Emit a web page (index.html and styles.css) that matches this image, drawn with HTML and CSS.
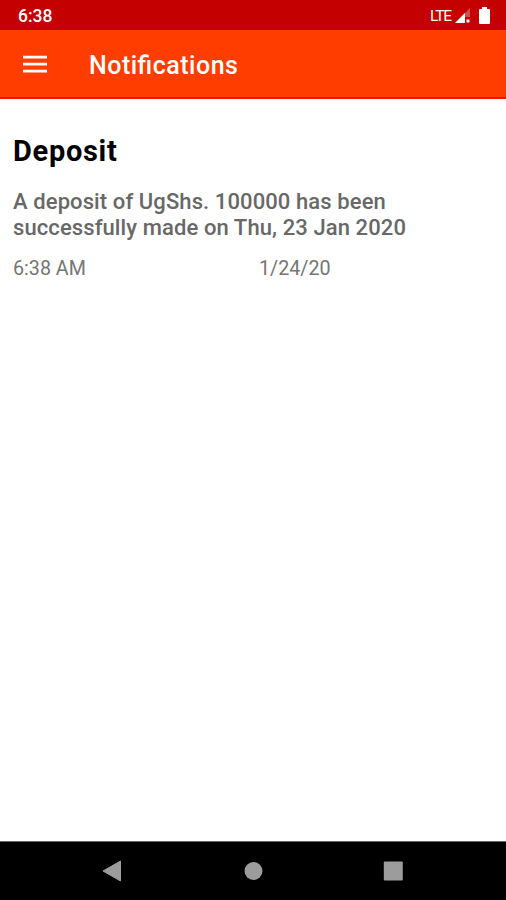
FILE: index.html
```html
<!DOCTYPE html>
<html lang="en">

<head>
  <meta charset="UTF-8" />
  <meta name="viewport" content="width=device-width, initial-scale=1.0" />
  <title>Notifications</title>
  <link rel="stylesheet" href="styles.css">
</head>

<body>
  <div class="status">
    <span class="clock">6:38</span>
    <div class="status-icons">
      <span class="network">LTE</span>
      <svg class="signal" width="15" height="15" viewBox="0 0 15 15">
        <path d="M0 15L15 0V9H10V15Z" fill="#fff" fill-opacity="0.3" />
        <path d="M0 15L10 5V15Z" fill="#fff" />
        <path d="M11.500 11.500h3v3h-3z" fill="#fff" />
      </svg>
      <svg class="battery" width="11" height="17" viewBox="0 0 11 17">
        <path d="M3 0h5v2h2q1 0 1 1v13q0 1-1 1H1q-1 0-1-1V3q0-1 1-1h2z" fill="#fff" />
      </svg>
    </div>
  </div>

  <header class="toolbar">
    <svg class="menu" width="24" height="18" viewBox="0 0 24 18">
      <path d="M0 0.800h24v2.700H0zM0 7.800h24v2.700H0zM0 14.800h24v2.700H0z" fill="#fff" />
    </svg>
    <h1>Notifications</h1>
  </header>

  <main>
    <div class="notification">
      <h2>Deposit</h2>
      <p>A deposit of UgShs. 100000 has been<br>successfully made on Thu, 23 Jan 2020</p>
      <div class="when">
        <span>6:38 AM</span>
        <span>1/24/20</span>
      </div>
    </div>
  </main>

  <nav class="navbar">
    <svg width="20" height="22" viewBox="0 0 20 22">
      <path d="M1 11L18.500 1V21Z" fill="#9c9c9c" stroke="#9c9c9c" stroke-linejoin="round" />
    </svg>
    <svg width="20" height="20" viewBox="0 0 20 20">
      <circle cx="10.500" cy="10" r="9" fill="#9c9c9c" />
    </svg>
    <svg width="20" height="20" viewBox="0 0 20 20">
      <rect x="0.800" y="0.500" width="19" height="19" rx="1" fill="#9c9c9c" />
    </svg>
  </nav>
</body>

</html>
```
FILE: styles.css
```css
* {
  box-sizing: border-box;
}

body {
  margin: 0;
  height: 900px;
  display: flex;
  flex-direction: column;
  background-color: white;
  font-family: Roboto, sans-serif;
}

h1, h2, p {
  margin: 0;
}

.status {
  height: 30px;
  padding: 1px 16px 0 18px;
  display: flex;
  align-items: center;
  justify-content: space-between;
  background-color: #c40000;
  color: white;
}

.clock {
  font-size: 17.5px;
  font-weight: 500;
  line-height: 20px;
}

.status-icons {
  display: flex;
  align-items: center;
}

.network {
  font-size: 15.5px;
  line-height: 18px;
  letter-spacing: -1.1px;
}

.signal {
  margin-left: 4px;
}

.battery {
  margin-left: 9px;
}

.toolbar {
  height: 69px;
  padding-left: 23px;
  display: flex;
  align-items: center;
  background-color: #ff3d00;
  border-bottom: 2px solid #f01800;
  color: white;
}

.toolbar h1 {
  margin-left: 42px;
  padding-top: 5px;
  font-size: 25px;
  font-weight: 500;
  line-height: 30px;
  letter-spacing: 0.5px;
  font-feature-settings: "liga" 1;
}

main {
  flex: 1;
}

.notification {
  padding: 35px 13px 0;
}

.notification h2 {
  font-size: 29px;
  font-weight: 700;
  line-height: 34px;
  letter-spacing: 0.7px;
  color: black;
}

.notification p {
  margin-top: 21px;
  font-size: 22px;
  font-weight: 500;
  line-height: 26px;
  letter-spacing: 0.1px;
  color: #686868;
}

.when {
  display: grid;
  grid-template-columns: 246px 1fr;
  margin-top: 16px;
  font-size: 19.7px;
  line-height: 24px;
  color: #757575;
}

.navbar {
  height: 59px;
  padding: 0 103px 0 102px;
  display: flex;
  align-items: center;
  justify-content: space-between;
  background-color: black;
  border-top: 1px solid #666;
}
```
